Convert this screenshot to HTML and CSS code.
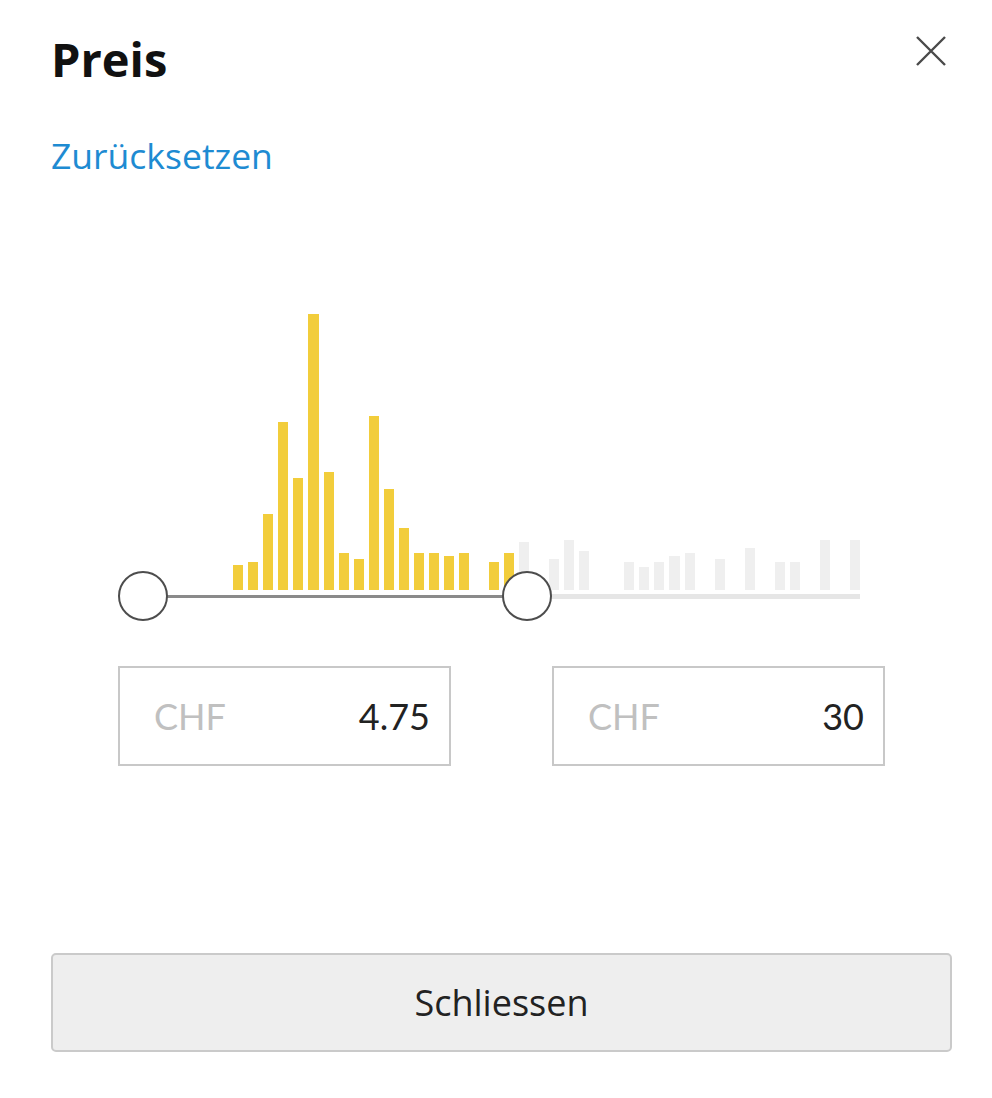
FILE: index.html
```html
<!DOCTYPE html>
<html lang="de">
<head>
<meta charset="utf-8">
<title>Preis</title>
<link rel="stylesheet" href="styles.css">
</head>
<body>
<div class="panel">
  <header class="header">
    <h1 class="title">Preis</h1>
    <button class="close" aria-label="Schliessen">
      <svg width="32" height="32" viewBox="0 0 32 32"><path d="M2 2 L30 30 M30 2 L2 30" stroke="#4a4a4a" stroke-width="2.4" fill="none"/></svg>
    </button>
  </header>
  <a class="reset" href="#">Zurücksetzen</a>

  <div class="slider">
    <div class="bars">
      <span></span><span></span><span></span><span></span><span></span><span></span>
      <span class="bar on" style="height:25px"></span>
      <span class="bar on" style="height:28px"></span>
      <span class="bar on" style="height:76px"></span>
      <span class="bar on" style="height:168px"></span>
      <span class="bar on" style="height:112px"></span>
      <span class="bar on" style="height:276px"></span>
      <span class="bar on" style="height:118px"></span>
      <span class="bar on" style="height:37px"></span>
      <span class="bar on" style="height:31px"></span>
      <span class="bar on" style="height:174px"></span>
      <span class="bar on" style="height:101px"></span>
      <span class="bar on" style="height:62px"></span>
      <span class="bar on" style="height:37px"></span>
      <span class="bar on" style="height:37px"></span>
      <span class="bar on" style="height:34px"></span>
      <span class="bar on" style="height:37px"></span>
      <span></span>
      <span class="bar on" style="height:28px"></span>
      <span class="bar on" style="height:37px"></span>
      <span class="bar off" style="height:48px"></span>
      <span></span>
      <span class="bar off" style="height:31px"></span>
      <span class="bar off" style="height:50px"></span>
      <span class="bar off" style="height:39px"></span>
      <span></span><span></span>
      <span class="bar off" style="height:28px"></span>
      <span class="bar off" style="height:23px"></span>
      <span class="bar off" style="height:28px"></span>
      <span class="bar off" style="height:34px"></span>
      <span class="bar off" style="height:37px"></span>
      <span></span>
      <span class="bar off" style="height:31px"></span>
      <span></span>
      <span class="bar off" style="height:42px"></span>
      <span></span>
      <span class="bar off" style="height:28px"></span>
      <span class="bar off" style="height:28px"></span>
      <span></span>
      <span class="bar off" style="height:50px"></span>
      <span></span>
      <span class="bar off" style="height:50px"></span>
    </div>
    <div class="track">
      <div class="track-active" style="width:53.6%"></div>
      <div class="track-rest"></div>
    </div>
    <div class="handle handle-min" style="left:0"></div>
    <div class="handle handle-max" style="left:384px"></div>
  </div>

  <div class="inputs">
    <label class="field"><span class="cur">CHF</span><span class="val">4.75</span></label>
    <label class="field"><span class="cur">CHF</span><span class="val">30</span></label>
  </div>

  <button class="primary">Schliessen</button>
</div>
</body>
</html>
```
FILE: styles.css
```css
* { box-sizing: border-box; }
html, body { margin: 0; padding: 0; background: #ffffff; }
body { width: 992px; height: 1098px; overflow: hidden; }

.panel {
  display: flex;
  flex-direction: column;
  padding: 36px 40px 0 51px;
  font-family: "Open Sans", "Noto Sans", sans-serif;
  color: #222;
}

.header {
  display: flex;
  justify-content: space-between;
  align-items: flex-start;
}
.title {
  margin: 0;
  font-size: 47px;
  line-height: 46px;
  font-weight: 700;
  color: #111;
}
.close {
  margin: -1px 5px 0 0;
  padding: 0;
  border: 0;
  background: none;
  width: 32px;
  height: 32px;
  display: block;
}
.close svg { display: block; }

.reset {
  margin-top: 55px;
  align-self: flex-start;
  font-size: 35.5px;
  line-height: 36px;
  color: #1e8bd2;
  text-decoration: none;
}

.slider {
  position: relative;
  margin: 141px 67px 0 67px;
  padding: 0 25px;
}
.bars {
  display: grid;
  grid-template-columns: repeat(48, 1fr);
  column-gap: 5px;
  height: 276px;
  align-items: end;
}
.bar { display: block; }
.bar.on { background: #f2cd3b; }
.bar.off { background: #efefef; }

.track {
  display: flex;
  align-items: center;
  height: 8px;
  margin-top: 2px;
}
.track-active { height: 3px; background: #8a8a8a; }
.track-rest { flex: 1; height: 5px; background: #e6e6e6; }

.handle {
  position: absolute;
  top: 257px;
  width: 50px;
  height: 50px;
  border-radius: 50%;
  border: 2.5px solid #4d4d4d;
  background: #fff;
}

.inputs {
  display: flex;
  justify-content: space-between;
  margin: 66px 67px 0 67px;
}
.field {
  display: flex;
  align-items: center;
  justify-content: space-between;
  width: 333px;
  height: 100px;
  border: 2px solid #c8c8c8;
  padding: 0 19px 0 34px;
  font-family: Lato, "Open Sans", sans-serif;
  font-size: 36px;
  line-height: 36px;
}
.cur { color: #c0c0c0; }
.val { color: #222; }

.primary {
  margin-top: 187px;
  height: 99px;
  width: 901px;
  background: #eeeeee;
  border: 2px solid #cacaca;
  border-radius: 5px;
  font-family: "Open Sans", "Noto Sans", sans-serif;
  font-size: 36px;
  color: #222;
  padding: 0;
}
```
